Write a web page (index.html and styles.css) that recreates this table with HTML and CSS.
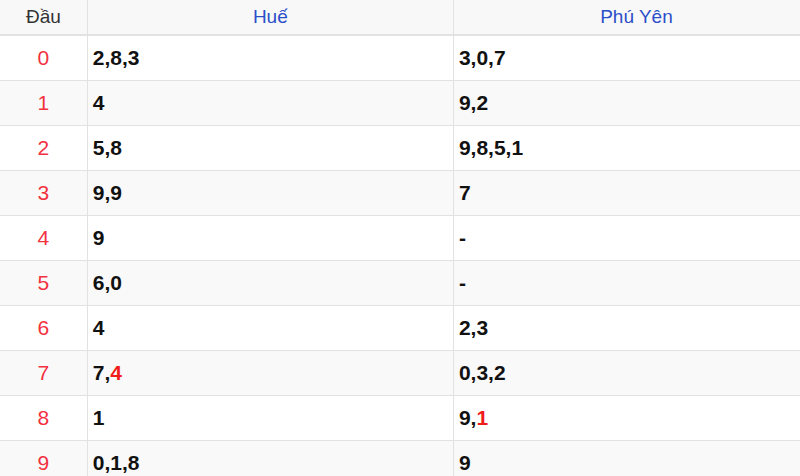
FILE: index.html
```html
<!DOCTYPE html>
<html lang="vi">
<head>
<meta charset="utf-8">
<title>Lô tô đầu</title>
<link rel="stylesheet" href="styles.css">
</head>
<body>
<table class="loto">
  <colgroup>
    <col class="c-head">
    <col class="c-prov">
    <col class="c-prov">
  </colgroup>
  <thead>
    <tr>
      <th class="h-dau">Đầu</th>
      <th class="h-prov">Huế</th>
      <th class="h-prov">Phú Yên</th>
    </tr>
  </thead>
  <tbody>
    <tr><td class="dau">0</td><td class="val">2,8,3</td><td class="val">3,0,7</td></tr>
    <tr><td class="dau">1</td><td class="val">4</td><td class="val">9,2</td></tr>
    <tr><td class="dau">2</td><td class="val">5,8</td><td class="val">9,8,5,1</td></tr>
    <tr><td class="dau">3</td><td class="val">9,9</td><td class="val">7</td></tr>
    <tr><td class="dau">4</td><td class="val">9</td><td class="val">-</td></tr>
    <tr><td class="dau">5</td><td class="val">6,0</td><td class="val">-</td></tr>
    <tr><td class="dau">6</td><td class="val">4</td><td class="val">2,3</td></tr>
    <tr><td class="dau">7</td><td class="val">7,<span class="hot">4</span></td><td class="val">0,3,2</td></tr>
    <tr><td class="dau">8</td><td class="val">1</td><td class="val">9,<span class="hot">1</span></td></tr>
    <tr><td class="dau">9</td><td class="val">0,1,8</td><td class="val">9</td></tr>
  </tbody>
</table>
</body>
</html>
```
FILE: styles.css
```css
html, body {
  margin: 0;
  padding: 0;
  overflow: hidden;
  background: #ffffff;
}

.loto {
  width: 820px;
  border-collapse: collapse;
  table-layout: fixed;
  font-family: "Liberation Sans", Arial, sans-serif;
}

.c-head { width: 87px; }
.c-prov { width: 365px; }

.loto th,
.loto td {
  border: 1px solid #e2e2e2;
  padding: 0;
}

.loto tr > :first-child { border-left: none; }
.loto thead th { border-top: none; }

.loto thead tr {
  background: #f8f8f8;
}

.loto th {
  height: 34px;
  font-weight: normal;
  font-size: 19px;
  line-height: 22px;
  text-align: center;
  vertical-align: middle;
}

.loto thead th { border-bottom: 2px solid #e2e2e2; }

.h-dau { color: #333333; }
.h-prov { color: #2b4fc9; }

.loto td {
  height: 44px;
  line-height: 24px;
  vertical-align: middle;
}

.loto tbody tr:nth-child(even) { background: #f9f9f9; }

.dau {
  text-align: center;
  color: #f2313f;
  font-size: 21px;
}

.loto .val {
  padding-left: 5px;
  font-size: 21px;
  font-weight: bold;
  color: #111111;
}

.hot { color: #f01c1c; }
```
